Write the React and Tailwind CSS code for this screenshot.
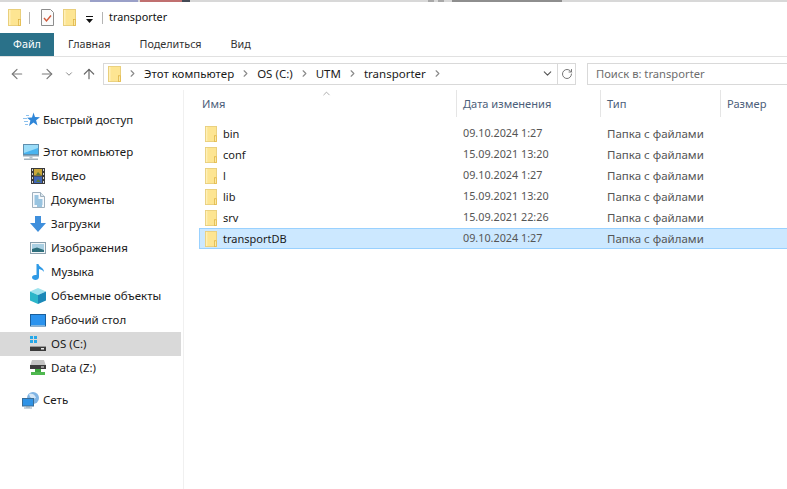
import React from 'react';
import { ArrowLeft, ArrowRight, ArrowUp, ChevronDown, ChevronRight, ChevronUp, RotateCw } from 'lucide-react';

const files = [
  { name: 'bin', date: '09.10.2024 1:27' },
  { name: 'conf', date: '15.09.2021 13:20' },
  { name: 'l', date: '09.10.2024 1:27' },
  { name: 'lib', date: '15.09.2021 13:20' },
  { name: 'srv', date: '15.09.2021 22:26' },
  { name: 'transportDB', date: '09.10.2024 1:27', selected: true },
];

function Folder({ w = 13, h = 17 }) {
  return (
    <svg width={w} height={h} viewBox="0 0 13 17" preserveAspectRatio="none" className="shrink-0">
      <rect x="0.5" y="0.5" width="12" height="16" fill="#fde592" stroke="#e9cf7c" />
      <rect x="1" y="1" width="1.5" height="15" fill="#fff0b8" />
      <rect x="10" y="10" width="3" height="7" fill="#f3c95c" />
      <rect x="10.5" y="10.5" width="2" height="6" fill="#fbeaa6" stroke="#d9ae3f" strokeWidth="0.6" />
    </svg>
  );
}

const icons = {
  star: (
    <svg width="18" height="16" viewBox="0 0 18 16">
      <path d="M11.500 0.500l1.500 4.500 5 .2-3.900 3 1.400 5.300-4-3-4.500 3.500 1.400-5.500-3.400-2.800 5-.2z" fill="#2f86d8" />
      <path d="M4 3.500h3M1 6.500h4M2 9.500h4M3 12.500h3" stroke="#8cc1ee" strokeWidth="1.200" />
    </svg>
  ),
  pc: (
    <svg width="18" height="17" viewBox="0 0 18 17">
      <rect x="1.500" y="0.500" width="15" height="10" fill="#49b4f0" stroke="#5f8fae" />
      <path d="M2 1h14v3L2 9z" fill="#9adcf8" />
      <rect x="1" y="11" width="16" height="1.500" fill="#8fa6b6" />
      <rect x="7.500" y="12.500" width="3" height="2" fill="#b3c2cc" />
      <rect x="2" y="14.500" width="14" height="1.500" fill="#a4b3bd" />
    </svg>
  ),
  video: (
    <svg width="14" height="16" viewBox="0 0 14 16">
      <rect width="14" height="16" fill="#3a3a3a" />
      <rect x="3" y="1" width="8" height="6.500" fill="#c9a83a" />
      <rect x="3" y="8.500" width="8" height="6.500" fill="#3f66b8" />
      <path d="M5 7l2-3 3 3zM5 14l2-3 3 3z" fill="#5b7a3a" />
      <path d="M1 1h1v2H1zM1 5h1v2H1zM1 9h1v2H1zM1 13h1v2H1zM12 1h1v2h-1zM12 5h1v2h-1zM12 9h1v2h-1zM12 13h1v2h-1z" fill="#d8d8d8" />
    </svg>
  ),
  doc: (
    <svg width="13" height="16" viewBox="0 0 13 16">
      <path d="M.5.500h8l4 4v11H.500z" fill="#f6f9fc" stroke="#9fb0bd" />
      <path d="M8.500.500v4h4" fill="#dbe6ee" stroke="#9fb0bd" />
      <path d="M2.500 4h4M2.500 6h4M2.500 8h8M2.500 10h8M2.500 12h8M5 14h5" stroke="#3d8fc4" />
    </svg>
  ),
  down: (
    <svg width="16" height="16" viewBox="0 0 16 16">
      <path d="M5 0h6v7h5l-8 9-8-9h5z" fill="#3f8fdc" />
    </svg>
  ),
  pics: (
    <svg width="16" height="12" viewBox="0 0 16 12">
      <rect x="0.500" y="0.500" width="15" height="11" fill="#f2f5f7" stroke="#8aa0ad" />
      <rect x="2" y="2" width="12" height="8" fill="#a9cfe2" />
      <path d="M2 7l5-1.500L14 8v2H2z" fill="#2e6f7c" />
    </svg>
  ),
  music: (
    <svg width="13" height="16" viewBox="0 0 13 16">
      <path d="M4.500 0h2c.3 3 5.500 3.500 5.500 8-1.200-1.800-3-2.600-5-3v8c0 2-1.800 3-3.500 3S0 15 0 13.300 1.800 10.500 4.500 11z" fill="#2f9ae6" />
    </svg>
  ),
  cube: (
    <svg width="16" height="16" viewBox="0 0 16 16">
      <path d="M8 0l8 3.500L8 7 0 3.500z" fill="#9fe3ee" />
      <path d="M0 3.500L8 7v9l-8-3.500z" fill="#2cb6c9" />
      <path d="M16 3.500L8 7v9l8-3.500z" fill="#1a88b8" />
    </svg>
  ),
  desktop: (
    <svg width="16" height="13" viewBox="0 0 16 13">
      <rect x="0.500" y="0.500" width="15" height="11.500" fill="#2b93ee" stroke="#1a5f9c" />
      <rect x="1" y="11" width="14" height="1" fill="#7fb4dd" />
    </svg>
  ),
  os: (
    <svg width="16" height="16" viewBox="0 0 16 16">
      <path d="M0 0h3v3H0zM4 0h3v3H4zM0 4h3v3H0zM4 4h3v3H4z" fill="#25a8e8" />
      <rect y="10" width="16" height="5" rx="0.500" fill="#3a3a3a" />
      <rect y="10" width="16" height="1" fill="#9a9a9a" />
      <rect x="11" y="12" width="3" height="1.500" fill="#e8e8e8" />
    </svg>
  ),
  data: (
    <svg width="16" height="16" viewBox="0 0 16 16">
      <path d="M2 0h12l2 6H0z" fill="#c4c4c4" />
      <rect y="5" width="16" height="4" fill="#3c3c3c" />
      <rect x="11" y="6.500" width="3" height="1" fill="#e8e8e8" />
      <rect x="5" y="9" width="6" height="3" fill="#3fa63f" />
      <rect x="1" y="12" width="14" height="3" fill="#4fb84f" />
    </svg>
  ),
  net: (
    <svg width="18" height="17" viewBox="0 0 18 17">
      <circle cx="11" cy="6" r="6" fill="#7fb4e4" />
      <path d="M7 2c3-1 6 0 7 4l-3 1-3-2z" fill="#d3e6f6" />
      <rect x="0.500" y="6.500" width="11" height="7.500" fill="#2f93e6" stroke="#3a6d96" />
      <rect x="4" y="14" width="4" height="1.500" fill="#8fa6b6" />
      <rect x="2" y="15.500" width="8" height="1" fill="#8fa6b6" />
    </svg>
  ),
};

function NavItem({ icon, label, active, indent, className = '' }) {
  return (
    <div className={`flex h-6 w-[181px] items-center ${active ? 'bg-[#d9d9d9]' : ''} ${className}`}>
      <div className={`flex h-6 items-center justify-center ${indent ? 'ml-[30px] w-4' : 'ml-[22px] w-[18px]'}`}>
        {icons[icon]}
      </div>
      <span className={indent ? 'ml-[5px]' : 'ml-[3px]'}>{label}</span>
    </div>
  );
}

function Crumb({ label }) {
  return (
    <>
      <span>{label}</span>
      <ChevronRight size={11} strokeWidth={2.5} className="mx-[6px] text-[#8a8a8a]" />
    </>
  );
}

export default function App() {
  return (
    <div className="flex h-[489px] w-[787px] flex-col overflow-hidden bg-white font-['Noto_Sans',sans-serif] text-[11.5px] leading-none text-[#1a1a1a]">
      {/* obrezok okna szadi */}
      <div className="flex h-[2px] shrink-0 bg-[#d8d8d8]">
        <div className="ml-[90px] w-[48px] bg-[#9aa0c8]" />
        <div className="ml-[2px] w-[42px] bg-[#c07070]" />
        <div className="w-[8px] bg-[#444a55]" />
        <div className="ml-[238px] w-[6px] bg-[#a8a8a8]" />
        <div className="ml-[4px] w-[6px] bg-[#a8a8a8]" />
        <div className="ml-[8px] w-[110px] bg-[#8e8e8e]" />
      </div>

      {/* title bar */}
      <div className="flex h-[31px] shrink-0 items-center">
        <div className="ml-[8px]"><Folder /></div>
        <div className="ml-[8px] h-[12px] w-px bg-[#b4b4b4]" />
        <svg width="13" height="17" viewBox="0 0 13 17" className="ml-[11px]">
          <path d="M.5.500h9l3 3v13H.500z" fill="#fbfbfb" stroke="#8d8d8d" />
          <path d="M3 9l2.500 3L10 6.500" fill="none" stroke="#d0593a" strokeWidth="1.400" />
        </svg>
        <div className="ml-[9px]"><Folder /></div>
        <svg width="9" height="7" viewBox="0 0 9 7" className="ml-[9px] mt-[3px]">
          <path d="M1 0h7v1H1zM1 3h7L4.500 7z" fill="#111" />
        </svg>
        <div className="ml-[8px] h-[12px] w-px bg-[#b4b4b4]" />
        <span className="ml-[6px] text-[10.8px] text-[#111]">transporter</span>
      </div>

      {/* ribbon tabs */}
      <div className="flex h-[24px] shrink-0 items-center border-b border-[#e1e1e1] text-[10.8px] text-[#333]">
        <div className="flex h-full w-[54px] items-center justify-center bg-[#2a7189] text-white">Файл</div>
        <span className="ml-[14px]">Главная</span>
        <span className="ml-[29px]">Поделиться</span>
        <span className="ml-[29px]">Вид</span>
      </div>

      {/* address row */}
      <div className="flex h-[33px] shrink-0 items-center">
        <ArrowLeft size={16} strokeWidth={1.8} className="ml-[9px] text-[#7b7b7b]" />
        <ArrowRight size={16} strokeWidth={1.8} className="ml-[14px] text-[#7b7b7b]" />
        <ChevronDown size={10} strokeWidth={2.4} className="ml-[9px] text-[#8a8a8a]" />
        <ArrowUp size={16} strokeWidth={1.8} className="ml-[7px] text-[#6a6a6a]" />
        <div className="ml-[6px] flex h-[22px] w-[473px] items-center border border-[#d9d9d9]">
          <div className="ml-[4px]"><Folder w={13} h={16} /></div>
          <ChevronRight size={11} strokeWidth={2.5} className="mx-[6px] text-[#8a8a8a]" />
          <Crumb label="Этот компьютер" />
          <Crumb label="OS (C:)" />
          <Crumb label="UTM" />
          <Crumb label="transporter" />
          <div className="ml-auto flex h-full items-center">
            <ChevronDown size={13} strokeWidth={2} className="mr-[3px] text-[#555]" />
            <div className="flex h-full w-[18px] items-center justify-center border-l border-[#d9d9d9]">
              <RotateCw size={12} strokeWidth={2} className="text-[#777]" />
            </div>
          </div>
        </div>
        <div className="ml-[11px] flex h-[22px] flex-1 items-center border border-r-0 border-[#d9d9d9] pl-[8px] text-[11.2px] text-[#6d6d6d]">
          Поиск в: transporter
        </div>
      </div>

      <div className="flex min-h-0 flex-1">
        {/* sidebar */}
        <div className="flex w-[184px] shrink-0 flex-col border-r border-[#f0f0f0] pt-[18px]">
          <NavItem icon="star" label="Быстрый доступ" className="mb-[8px]" />
          <NavItem icon="pc" label="Этот компьютер" />
          <NavItem icon="video" label="Видео" indent />
          <NavItem icon="doc" label="Документы" indent />
          <NavItem icon="down" label="Загрузки" indent />
          <NavItem icon="pics" label="Изображения" indent />
          <NavItem icon="music" label="Музыка" indent />
          <NavItem icon="cube" label="Объемные объекты" indent />
          <NavItem icon="desktop" label="Рабочий стол" indent />
          <NavItem icon="os" label="OS (C:)" indent active />
          <NavItem icon="data" label="Data (Z:)" indent />
          <NavItem icon="net" label="Сеть" className="mt-[8px]" />
        </div>

        {/* file list */}
        <div className="min-w-0 flex-1">
          <div className="relative flex h-[27px] items-center text-[11.1px] text-[#4c607a]">
            <ChevronUp size={11} strokeWidth={1.5} className="absolute left-[137px] top-[-2px] text-[#8a8a8a]" />
            <div className="ml-[18px] w-[254px]">Имя</div>
            <div className="flex h-full w-[144px] items-center border-l border-[#e5e5e5] pl-[6px]">Дата изменения</div>
            <div className="flex h-full w-[120px] items-center border-l border-[#e5e5e5] pl-[6px]">Тип</div>
            <div className="flex h-full flex-1 items-center border-l border-[#e5e5e5] pl-[6px]">Размер</div>
          </div>
          <div className="mt-[6px] ml-[15px]">
            {files.map((f) => (
              <div
                key={f.name}
                className={`flex h-[21px] items-center border border-r-0 ${f.selected ? 'border-[#99d1ff] bg-[#cce8ff]' : 'border-transparent'}`}
              >
                <div className="ml-[5px]"><Folder w={12} h={16} /></div>
                <span className="ml-[6px] w-[240px] text-[11px]">{f.name}</span>
                <span className="w-[144px] text-[10.8px] text-[#555]">{f.date}</span>
                <span className="text-[#555]">Папка с файлами</span>
              </div>
            ))}
          </div>
        </div>
      </div>
    </div>
  );
}
